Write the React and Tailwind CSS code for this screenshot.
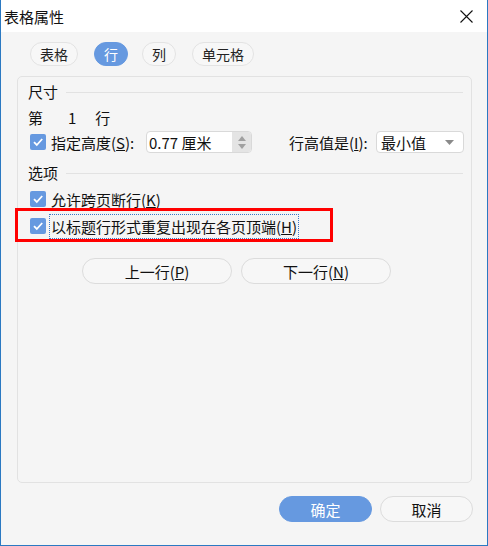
import React from 'react';

const font = "font-['Noto_Sans_CJK_SC','Microsoft_YaHei',sans-serif]";

const Check = () => (
    <span className="w-[16px] h-[16px] rounded-[2px] bg-[#6699e0] flex items-center justify-center shrink-0">
        <svg width="12" height="12" viewBox="0 0 12 12">
            <path d="M2 6.2 L4.8 9 L10.2 3" fill="none" stroke="#fff" strokeWidth="1.8" />
        </svg>
    </span>
);

const Pill = ({children, active, className = ''}) => (
    <div
        className={`h-[24px] px-[9px] rounded-full border flex items-center text-[14px] leading-none ${
            active ? 'bg-[#6699e0] border-[#6699e0] text-white' : 'bg-[#f7f7f7] border-[#e3e3e3] text-[#222]'
        } ${className}`}
    >
        {children}
    </div>
);

const Section = ({title}) => (
    <div className="h-[20px] flex items-center pl-[10px] pr-[8px]">
        <span className="text-[15px] leading-none">{title}</span>
        <div className="flex-1 h-px bg-[#e2e2e2] ml-[8px] mt-[2px]" />
    </div>
);

const Btn = ({children, primary, className = ''}) => (
    <button
        className={`h-[26px] rounded-full border flex items-center justify-center text-[15px] leading-none ${
            primary ? 'bg-[#6699e0] border-[#6699e0] text-white' : 'bg-[#f7f7f7] border-[#dcdcdc] text-[#111]'
        } ${className}`}
    >
        {children}
    </button>
);

export default function App() {
    return (
        <div className={`w-[488px] h-[546px] flex flex-col bg-[#f5f5f5] border-x border-b border-[#2b79c2] text-[#111] ${font}`}>
            {/* title bar */}
            <div className="h-[32px] bg-white flex items-center justify-between pl-[3px] pr-[14px] shrink-0">
                <span className="text-[15px] leading-none">表格属性</span>
                <svg width="13" height="13" viewBox="0 0 13 13">
                    <path d="M0.5 0.5 L12.5 12.5 M12.5 0.5 L0.5 12.5" stroke="#111" strokeWidth="1.1" />
                </svg>
            </div>

            {/* tabs */}
            <div className="flex pl-[29px] pt-[10px]">
                <Pill>表格</Pill>
                <Pill active className="ml-[16px]">行</Pill>
                <Pill className="ml-[14px]">列</Pill>
                <Pill className="ml-[16px]">单元格</Pill>
            </div>

            {/* group box */}
            <div className="mt-[10px] ml-[16px] w-[455px] h-[407px] border border-[#e2e2e2] rounded-[5px] flex flex-col pt-[4px] relative">
                <Section title="尺寸" />

                <div className="mt-[6px] h-[20px] flex items-center pl-[10px] text-[15px] leading-none">
                    <span>第</span>
                    <span className="ml-[25px]">1</span>
                    <span className="ml-[19px]">行</span>
                </div>

                <div className="mt-[4px] h-[22px] flex items-center pl-[12px] text-[15px] leading-none">
                    <Check />
                    <span className="ml-[5px] w-[95px]">指定高度(<u>S</u>):</span>
                    <div className="w-[106px] h-[22px] bg-white border border-[#d9d9d9] rounded-[4px] flex overflow-hidden">
                        <span className="flex-1 flex items-center pl-[2px]">0.77 厘米</span>
                        <span className="w-[19px] bg-[#e4e4e4] flex flex-col items-center justify-center gap-[3px]">
                            <svg width="8" height="5" viewBox="0 0 8 5"><path d="M0 5 L4 0 L8 5 Z" fill="#a0a0a0" /></svg>
                            <svg width="8" height="5" viewBox="0 0 8 5"><path d="M0 0 L4 5 L8 0 Z" fill="#a0a0a0" /></svg>
                        </span>
                    </div>
                    <span className="ml-[37px] w-[87px]">行高值是(<u>I</u>):</span>
                    <div className="w-[88px] h-[22px] bg-white border border-[#d9d9d9] rounded-[4px] flex items-center justify-between pl-[4px] pr-[9px]">
                        <span>最小值</span>
                        <svg width="9" height="5" viewBox="0 0 9 5"><path d="M0 0 L4.5 5 L9 0 Z" fill="#8a8a8a" /></svg>
                    </div>
                </div>

                <div className="mt-[9px]">
                    <Section title="选项" />
                </div>

                <div className="mt-[7px] h-[20px] flex items-center pl-[12px] text-[15px] leading-none">
                    <Check />
                    <span className="ml-[5px]">允许跨页断行(<u>K</u>)</span>
                </div>

                <div className="mt-[7px] h-[20px] flex items-center pl-[12px] text-[15px] leading-none relative">
                    <Check />
                    <span className="ml-[3px] h-[25px] px-[1px] flex items-center border border-dotted border-[#3b78c8]">
                        以标题行形式重复出现在各页顶端(<u>H</u>)
                    </span>
                    {/* annotation box */}
                    <div className="absolute left-[-3px] top-[-8px] w-[318px] h-[34px] border-[3px] border-[#ff0000] pointer-events-none" />
                </div>

                <div className="mt-[22px] flex gap-[9px] ml-[64px]">
                    <Btn className="w-[150px] h-[25px]">上一行(<u>P</u>)</Btn>
                    <Btn className="w-[150px] h-[25px]">下一行(<u>N</u>)</Btn>
                </div>
            </div>

            {/* footer */}
            <div className="mt-[13px] flex justify-end gap-2 pr-[14px]">
                <Btn primary className="w-[93px]">确定</Btn>
                <Btn className="w-[93px]">取消</Btn>
            </div>
        </div>
    );
}
